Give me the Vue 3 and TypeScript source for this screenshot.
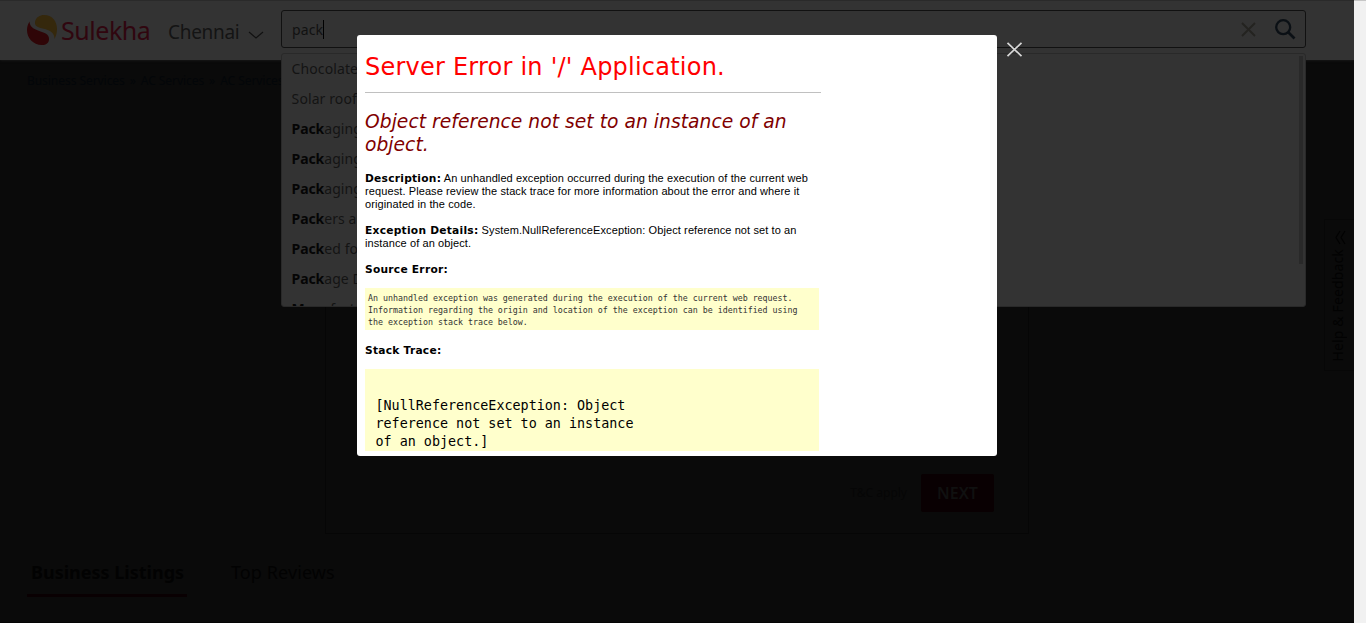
<script setup lang="ts">
interface Suggestion {
  match: string
  rest: string
}

const suggestions: Suggestion[] = [
  { match: '', rest: 'Chocolates' },
  { match: '', rest: 'Solar roof' },
  { match: 'Pack', rest: 'aging' },
  { match: 'Pack', rest: 'aging' },
  { match: 'Pack', rest: 'aging' },
  { match: 'Pack', rest: 'ers and' },
  { match: 'Pack', rest: 'ed food' },
  { match: 'Pack', rest: 'age Design' },
  { match: 'M', rest: 'anufacturers' },
]
</script>

<template>
  <div class="window">
    <div class="page">
      <header class="header">
        <div class="brand">
          <svg class="mark" width="30" height="30" viewBox="0 0 30 30">
            <path d="M8 7C9 2 13 0 17 0C25 0 30 6 30 14C30 18 29 21 27.500 24C27.500 18 24 16 18 14C12 12.500 7.500 12 8 7Z" fill="#35280c" />
            <path d="M2.500 6.500C3 12 6 13.500 11 15.500C18 18 22 19 22 24C22 28 19 30 15 30C6 30 0 23 0 15C0 12 1 9 2.500 6.500Z" fill="#2f0507" />
          </svg>
          <span class="name">Sulekha</span>
        </div>
        <div class="city">
          <span class="city-name">Chennai</span>
          <svg width="16" height="9" viewBox="0 0 16 9"><path d="M1 1L8 7L15 1" fill="none" stroke="#111" stroke-width="1.2" /></svg>
        </div>
        <div class="search">
          <span class="query">pack</span><i class="caret"></i>
          <svg class="clear" width="15" height="15" viewBox="0 0 15 15"><path d="M1 1L14 14M14 1L1 14" stroke="#242320" stroke-width="1.8" /></svg>
          <svg class="lens" width="21" height="21" viewBox="0 0 21 21"><circle cx="8.200" cy="8.200" r="7" fill="none" stroke="#0b1015" stroke-width="2.300" /><path d="M13 13L19.500 19.500" stroke="#0b1015" stroke-width="2.700" /></svg>
        </div>
      </header>
      <nav class="crumbs">
        <span class="c1">Business Services</span><b>»</b><span class="c2">AC Services</span><b>»</b><span class="c3">AC Services</span>
      </nav>
      <section class="card">
        <span class="terms">T&amp;C apply</span>
        <button class="next">NEXT</button>
      </section>
      <div class="tabs">
        <span class="tab active"><span>Business Listings</span></span>
        <span class="tab other">Top Reviews</span>
      </div>
    </div>
    <div class="gutter"></div>

    <div class="dropdown">
      <div v-for="(s, i) in suggestions" :key="i" class="option"><b>{{ s.match }}</b>{{ s.rest }}</div>
      <i class="thumb"></i>
    </div>

    <aside class="feedback">
      <span>Help &amp; Feedback</span>
      <svg width="11" height="15" viewBox="0 0 11 15"><path d="M5 1L1 7.500L5 14M10 1L6 7.500L10 14" fill="none" stroke="#020202" stroke-width="1.200" /></svg>
    </aside>

    <div class="dialog">
      <h1>Server Error in '/' Application.</h1>
      <h2>Object reference not set to an instance of an<br>object.</h2>
      <p><b>Description:</b> An unhandled exception occurred during the execution of the current web<br>request. Please review the stack trace for more information about the error and where it<br>originated in the code.</p>
      <p><b>Exception Details:</b> System.NullReferenceException: Object reference not set to an<br>instance of an object.</p>
      <p class="source-title"><b>Source Error:</b></p>
      <pre class="source">An unhandled exception was generated during the execution of the current web request.
Information regarding the origin and location of the exception can be identified using
the exception stack trace below.</pre>
      <p class="trace-title"><b>Stack Trace:</b></p>
      <pre class="trace">[NullReferenceException: Object
reference not set to an instance
of an object.]</pre>
    </div>
    <svg class="close" width="17" height="15" viewBox="0 0 17 15"><path d="M1.500 .8L15.500 14.200M15.500 .8L1.500 14.200" stroke="#d8d8d8" stroke-width="1.700" /></svg>
  </div>
</template>

<style>
body {
  margin: 0;
  overflow: hidden;
  background: #0a0a0a;
}
</style>

<style scoped>
* { box-sizing: border-box; }
.window {
  position: relative;
  display: flex;
  width: 1366px;
  height: 623px;
  overflow: hidden;
  background: #0a0a0a;
  font-family: "Noto Sans", "Open Sans", sans-serif;
}
.page {
  width: 1354px;
  height: 623px;
  border-bottom: 1px solid #040404;
}
.gutter {
  width: 12px;
  background: #f1f1f1;
  border-top: 1px solid #c6c6c6;
}
.header {
  display: flex;
  height: 60px;
  padding-left: 27px;
  background: #333;
  border-top: 1px solid #2a2a2a;
  box-shadow: 0 1px 2px #161616;
}
.brand {
  display: flex;
  width: 141px;
  padding-top: 14px;
}
.mark { flex: none; }
.name {
  margin-left: 4px;
  font-size: 25px;
  line-height: 30px;
  letter-spacing: -0.45px;
  color: #30060f;
}
.city {
  display: flex;
  width: 113px;
  color: #141414;
  font-size: 19px;
  line-height: 63px;
}
.city-name { width: 80px; letter-spacing: -0.3px; }
.city svg { margin-top: 30px; }
.search {
  display: flex;
  align-items: center;
  width: 1025px;
  height: 38px;
  margin-top: 9px;
  padding: 0 9px 0 10px;
  border: 1px solid #111;
  border-radius: 3px;
  color: #111;
  font-size: 14px;
}
.query { letter-spacing: 0.1px; }
.caret { width: 1px; height: 19px; background: #000; }
.clear { margin-left: auto; }
.lens { margin-left: 19px; }
.crumbs {
  width: 281px;
  height: 40px;
  padding: 12px 0 0 27px;
  overflow: hidden;
  font-size: 12px;
  line-height: 18px;
  color: #030609;
  white-space: nowrap;
}
.crumbs b { display: inline-block; width: 16px; text-align: center; font-weight: 400; }
.crumbs span { letter-spacing: -0.05px; }
.card {
  display: flex;
  align-items: flex-end;
  justify-content: flex-end;
  width: 704px;
  height: 434px;
  margin-left: 325px;
  padding: 0 34px 21px 0;
  border: 1px solid #060606;
}
.terms { margin-right: 14px; font-size: 12px; line-height: 38px; color: #060606; }
.next {
  width: 73px;
  height: 38px;
  padding: 0;
  border: 0;
  border-radius: 2px;
  background: #090002;
  color: #101010;
  font: 600 16px "Noto Sans", sans-serif;
}
.tabs {
  display: flex;
  height: 51px;
  margin: 12px 0 0 27px;
  font-size: 18px;
  line-height: 53px;
  color: #020202;
}
.active {
  width: 160px;
  padding-left: 4px;
  border-bottom: 3px solid #090002;
  font-weight: 700;
  white-space: nowrap;
}
.other { margin-left: 44px; letter-spacing: 0.1px; }
.dropdown {
  position: absolute;
  top: 53px;
  left: 281px;
  width: 1025px;
  height: 254px;
  overflow: hidden;
  border: 1px solid #292929;
  border-radius: 3px;
  background: #333;
}
.option {
  height: 30px;
  padding-left: 9.6px;
  color: #141414;
  font-size: 14px;
  line-height: 30px;
  letter-spacing: 0.1px;
}
.option b { color: #050505; font-weight: 700; letter-spacing: -0.1px; }
.thumb { position: absolute; top: 2px; right: 2px; width: 4px; height: 208px; background: #292929; }
.feedback {
  position: absolute;
  top: 219px;
  left: 1324px;
  display: flex;
  flex-direction: column-reverse;
  align-items: center;
  justify-content: flex-start;
  gap: 4px;
  width: 30px;
  height: 152px;
  padding: 0 4px 8px 0;
  border: 1px solid #070707;
  border-right: 0;
  color: #020202;
}
.feedback span {
  writing-mode: vertical-rl;
  transform: rotate(180deg);
  font-size: 14px;
  line-height: 18px;
  letter-spacing: 0.15px;
}
.feedback svg { margin-left: 6px; }
.dialog {
  position: absolute;
  top: 35px;
  left: 357px;
  width: 640px;
  height: 421px;
  padding: 16px 8px 0;
  overflow: hidden;
  border-radius: 3px;
  background: #fff;
  color: #000;
  font-family: "DejaVu Sans", sans-serif;
  white-space: nowrap;
}
h1 {
  width: 456px;
  height: 42px;
  margin: 0;
  border-bottom: 1px solid #c0c0c0;
  color: #f00;
  font-size: 24px;
  font-weight: 400;
  line-height: 33px;
  letter-spacing: 0.23px;
}
h2 {
  margin: 17px 0 0;
  color: maroon;
  font-size: 18.67px;
  font-style: italic;
  font-weight: 400;
  line-height: 23px;
  letter-spacing: 0.05px;
}
p {
  margin: 16px 0 13px;
  font: 11px/13px "Liberation Sans", Arial, sans-serif;
  letter-spacing: 0.1px;
}
p + p { margin-top: 0; }
p b { font: 700 10.67px/12px "DejaVu Sans", sans-serif; letter-spacing: 0.25px; }
pre { width: 454px; margin: 0; background: #ffc; font-family: "DejaVu Sans Mono", monospace; }
p.source-title { margin-bottom: 12px; }
.source { height: 42px; padding: 4px 3px 0; color: #333; font-size: 8.31px; line-height: 12px; }
p.trace-title { margin: 14px 0 12px; }
.trace { height: 82px; padding: 28px 10.5px 0; font-size: 13.4px; line-height: 18px; }
.close { position: absolute; left: 1006px; top: 42px; }
</style>
